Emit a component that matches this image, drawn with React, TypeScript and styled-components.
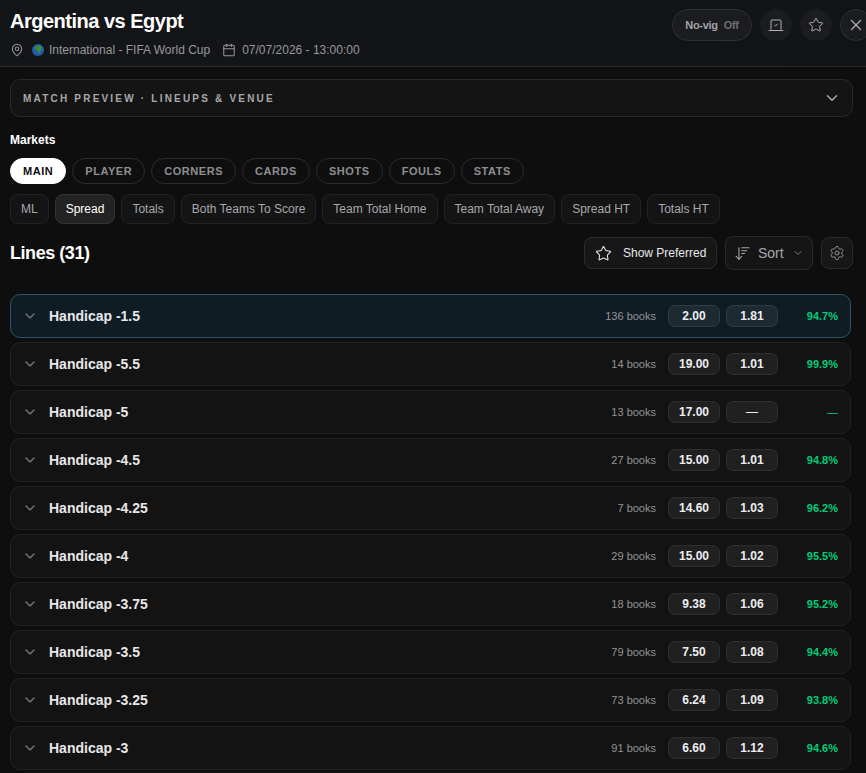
import styled, {createGlobalStyle} from 'styled-components';
import {Calendar, ChevronDown, MapPin, Settings, Star, X, ArrowDownWideNarrow} from 'lucide-react';

const GlobalStyle = createGlobalStyle`
  html, body {
    margin: 0;
    padding: 0;
    background: #0e0e0f;
  }
  * {
    box-sizing: border-box;
  }
  body {
    font-family: "Liberation Sans", Arial, sans-serif;
    color: #fff;
  }
`;

const categories = ['MAIN', 'PLAYER', 'CORNERS', 'CARDS', 'SHOTS', 'FOULS', 'STATS'];
const subTabs = ['ML', 'Spread', 'Totals', 'Both Teams To Score', 'Team Total Home', 'Team Total Away', 'Spread HT', 'Totals HT'];

const lines = [
  {name: 'Handicap -1.5', books: 136, a: '2.00', b: '1.81', pct: '94.7%'},
  {name: 'Handicap -5.5', books: 14, a: '19.00', b: '1.01', pct: '99.9%'},
  {name: 'Handicap -5', books: 13, a: '17.00', b: '—', pct: '—'},
  {name: 'Handicap -4.5', books: 27, a: '15.00', b: '1.01', pct: '94.8%'},
  {name: 'Handicap -4.25', books: 7, a: '14.60', b: '1.03', pct: '96.2%'},
  {name: 'Handicap -4', books: 29, a: '15.00', b: '1.02', pct: '95.5%'},
  {name: 'Handicap -3.75', books: 18, a: '9.38', b: '1.06', pct: '95.2%'},
  {name: 'Handicap -3.5', books: 79, a: '7.50', b: '1.08', pct: '94.4%'},
  {name: 'Handicap -3.25', books: 73, a: '6.24', b: '1.09', pct: '93.8%'},
  {name: 'Handicap -3', books: 91, a: '6.60', b: '1.12', pct: '94.6%'},
];

const App = () => {
  return (
    <Page>
      <GlobalStyle />
      <Header>
        <div>
          <Title>Argentina vs Egypt</Title>
          <Meta>
            <MapPin size={14} strokeWidth={1.75} />
            <Globe viewBox="0 0 12 12">
              <circle cx="6" cy="6" r="6" fill="#1d5fa8" />
              <path d="M3 2.5 7 1l3 2.5L8.5 7 7 10 5.5 7 3 5.5z" fill="#3f8a3a" />
            </Globe>
            <span>International - FIFA World Cup</span>
            <DateIcon>
              <Calendar size={14} strokeWidth={1.75} />
            </DateIcon>
            <span>07/07/2026 - 13:00:00</span>
          </Meta>
        </div>
        <HeaderActions>
          <NoVig>
            <b>No-vig</b>
            <span>Off</span>
          </NoVig>
          <RoundBtn>
            <svg width="16" height="16" viewBox="0 0 16 16" fill="none" stroke="currentColor" strokeWidth="1">
              <path d="M3 12.5V4a1 1 0 0 1 1-1h8a1 1 0 0 1 1 1v8.5" />
              <path d="M.7 13.5h14.6" />
              <path d="M6.4 8 7.5 9.1 9.6 6.8" />
            </svg>
          </RoundBtn>
          <RoundBtn>
            <Star size={16} strokeWidth={1.5} />
          </RoundBtn>
          <RoundBtn $outlined>
            <X size={18} strokeWidth={1.75} />
          </RoundBtn>
        </HeaderActions>
      </Header>

      <Content>
        <Preview>
          <span>MATCH PREVIEW · LINEUPS &amp; VENUE</span>
          <ChevronDown size={18} strokeWidth={1.75} color="#b5b5b8" />
        </Preview>

        <MarketsLabel>Markets</MarketsLabel>
        <PillRow>
          {categories.map(c => (
            <Pill key={c} $active={c === 'MAIN'}>
              {c}
            </Pill>
          ))}
        </PillRow>
        <TabRow>
          {subTabs.map(t => (
            <Tab key={t} $active={t === 'Spread'}>
              {t}
            </Tab>
          ))}
        </TabRow>

        <LinesHead>
          <LinesTitle>Lines (31)</LinesTitle>
          <Tools>
            <PreferredBtn>
              <Star size={17} strokeWidth={1.5} />
              Show Preferred
            </PreferredBtn>
            <SortBtn>
              <ArrowDownWideNarrow size={17} strokeWidth={1.5} />
              Sort
              <ChevronDown size={12} color="#77777b" />
            </SortBtn>
            <GearBtn>
              <Settings size={16} strokeWidth={1.5} />
            </GearBtn>
          </Tools>
        </LinesHead>

        <Rows>
          {lines.map((l, i) => (
            <Row key={l.name} $active={i === 0}>
              <ChevronDown size={16} color="#77777b" />
              <RowName>{l.name}</RowName>
              <Books>{l.books} books</Books>
              <Odds $active={i === 0}>{l.a}</Odds>
              <Odds $active={i === 0} $empty={l.b === '—'}>
                {l.b}
              </Odds>
              <Pct $empty={l.pct === '—'}>{l.pct}</Pct>
            </Row>
          ))}
        </Rows>
      </Content>
    </Page>
  );
};

const Page = styled.div`
  width: 866px;
  height: 773px;
  overflow: hidden;
`;
const Header = styled.header`
  height: 67px;
  display: flex;
  justify-content: space-between;
  padding: 9px 0 0 10px;
  margin-right: -6px;
  background: linear-gradient(90deg, #141518, #121316);
  border-bottom: 1px solid #2a2a2c;
`;
const Title = styled.h1`
  margin: 0;
  font-size: 20px;
  line-height: 24px;
  font-weight: 700;
  letter-spacing: -0.5px;
`;
const Meta = styled.div`
  display: flex;
  align-items: center;
  margin-top: 9px;
  font-size: 12px;
  line-height: 16px;
  color: #98989b;
`;
const Globe = styled.svg`
  width: 12px;
  height: 12px;
  margin: 0 5px 0 8px;
`;
const DateIcon = styled.span`
  display: flex;
  margin: 0 6px 0 12px;
`;
const HeaderActions = styled.div`
  display: flex;
  gap: 8px;
`;
const NoVig = styled.div`
  width: 80px;
  height: 32px;
  display: flex;
  align-items: center;
  justify-content: center;
  gap: 6px;
  border-radius: 16px;
  background: #1b1c1f;
  border: 1px solid #2e2f32;
  font-size: 11px;
  letter-spacing: -0.3px;
  color: #a3a3a6;
  b {
    font-weight: 700;
  }
  span {
    color: #6f6f73;
    font-weight: 700;
  }
`;
const RoundBtn = styled.div<{$outlined?: boolean}>`
  width: 32px;
  height: 32px;
  border-radius: 50%;
  display: flex;
  align-items: center;
  justify-content: center;
  background: #1b1c1f;
  color: #b0b0b3;
  border: 1px solid ${p => (p.$outlined ? '#2e2f32' : '#1b1c1f')};
`;
const Content = styled.main`
  padding: 12px 13px 0 10px;
`;
const Preview = styled.div`
  height: 38px;
  display: flex;
  align-items: center;
  justify-content: space-between;
  padding: 0 11px 0 12px;
  border: 1px solid #29292b;
  border-radius: 10px;
  background: #141415;
  font-size: 10px;
  font-weight: 700;
  letter-spacing: 2.2px;
  color: #a8a8ab;
`;
const MarketsLabel = styled.div`
  margin-top: 15px;
  font-size: 12px;
  line-height: 16px;
  font-weight: 700;
`;
const PillRow = styled.div`
  display: flex;
  gap: 6px;
  margin-top: 10px;
`;
const Pill = styled.div<{$active?: boolean}>`
  height: 26px;
  padding: 0 12px;
  display: flex;
  align-items: center;
  border-radius: 13px;
  border: 1px solid ${p => (p.$active ? '#fff' : '#2b2b2d')};
  background: ${p => (p.$active ? '#fff' : 'transparent')};
  color: ${p => (p.$active ? '#0e0e0f' : '#8e8e91')};
  font-size: 11px;
  font-weight: 700;
  letter-spacing: 0.55px;
`;
const TabRow = styled.div`
  display: flex;
  gap: 6px;
  margin-top: 10px;
`;
const Tab = styled.div<{$active?: boolean}>`
  height: 30px;
  padding: 0 10px;
  display: flex;
  align-items: center;
  border-radius: 8px;
  border: 1px solid ${p => (p.$active ? '#343436' : '#222224')};
  background: ${p => (p.$active ? '#232324' : '#141415')};
  color: ${p => (p.$active ? '#fff' : '#a8a8ab')};
  font-size: 12px;
`;
const LinesHead = styled.div`
  display: flex;
  align-items: center;
  justify-content: space-between;
  margin-top: 12px;
`;
const LinesTitle = styled.h2`
  margin: 0;
  font-size: 18px;
  line-height: 22px;
  font-weight: 700;
  letter-spacing: -0.45px;
`;
const Tools = styled.div`
  display: flex;
  align-items: center;
  gap: 8px;
`;
const PreferredBtn = styled.div`
  width: 133px;
  height: 32px;
  display: flex;
  align-items: center;
  gap: 11px;
  padding-left: 10px;
  border-radius: 8px;
  border: 1px solid #2b2b2d;
  background: #171718;
  font-size: 12px;
  color: #e8e8ea;
`;
const SortBtn = styled.div`
  width: 88px;
  height: 34px;
  display: flex;
  align-items: center;
  gap: 8px;
  padding-left: 8px;
  border-radius: 8px;
  border: 1px solid #2b2b2d;
  background: #151516;
  font-size: 14px;
  color: #a8a8ab;
  svg:first-child {
    margin-right: -1px;
  }
`;
const GearBtn = styled.div`
  width: 32px;
  height: 32px;
  display: flex;
  align-items: center;
  justify-content: center;
  border-radius: 8px;
  border: 1px solid #2b2b2d;
  background: #171718;
  color: #8e8e91;
`;
const Rows = styled.div`
  display: flex;
  flex-direction: column;
  gap: 4px;
  margin: 24px 2px 0 0;
`;
const Row = styled.div<{$active?: boolean}>`
  height: 44px;
  flex-shrink: 0;
  display: flex;
  align-items: center;
  padding: 0 12px 0 11px;
  border-radius: 10px;
  border: 1px solid ${p => (p.$active ? '#2a5468' : '#222224')};
  background: ${p => (p.$active ? '#0f1c24' : '#131314')};
`;
const RowName = styled.div`
  margin-left: 11px;
  flex: 1;
  font-size: 14px;
  font-weight: 700;
  color: #e8e8ea;
`;
const Books = styled.div`
  margin-right: 12px;
  font-size: 11px;
  color: #949497;
`;
const Odds = styled.div<{$active?: boolean; $empty?: boolean}>`
  width: 52px;
  height: 22px;
  margin-right: 6px;
  display: flex;
  align-items: center;
  justify-content: center;
  border-radius: 7px;
  border: 1px solid ${p => (p.$active ? '#2e3c44' : '#2e2e30')};
  background: ${p => (p.$active ? '#1c2a32' : '#202021')};
  font-size: 12px;
  font-weight: ${p => (p.$empty ? 400 : 700)};
  color: #eeeef0;
`;
const Pct = styled.div<{$empty?: boolean}>`
  width: 54px;
  text-align: right;
  font-size: 11px;
  font-weight: ${p => (p.$empty ? 400 : 700)};
  color: #00cc7a;
`;

export default App;
